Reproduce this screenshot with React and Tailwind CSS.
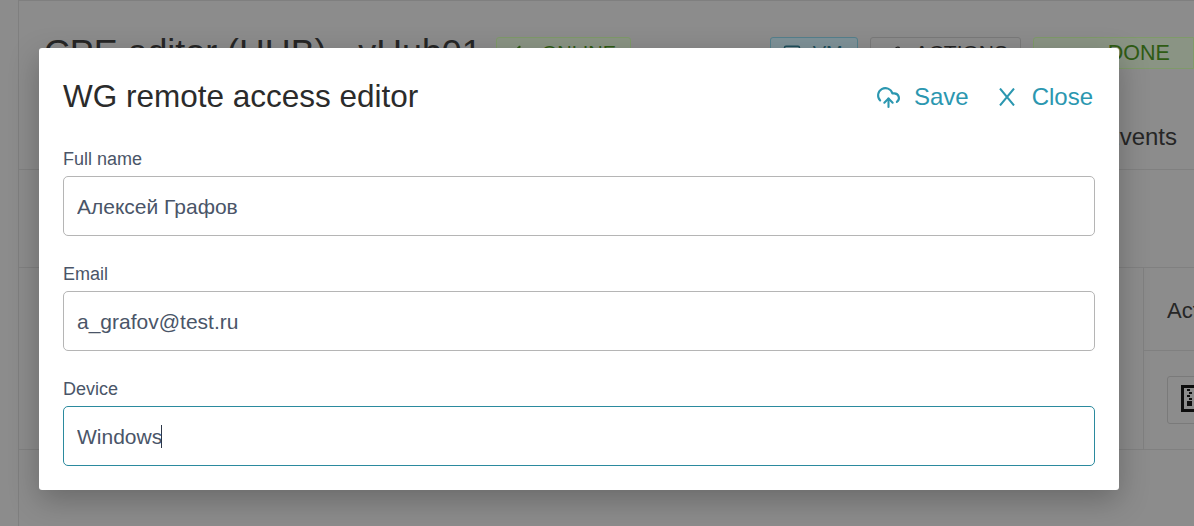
import { useEffect, useRef } from 'react'
import { CloudUpload, Zap, Monitor, Wrench } from 'lucide-react'

function Field({ label, value, focused, className }) {
  const inputRef = useRef(null)

  useEffect(() => {
    if (focused && inputRef.current) {
      const el = inputRef.current
      el.focus()
      el.setSelectionRange(value.length, value.length)
    }
  }, [focused, value])

  return (
    <div className={className}>
      <label className="block text-[18px] leading-[22px] pt-px h-[22px] text-[#4a5568] mb-[7px]">{label}</label>
      <div className="relative">
        <input
          ref={inputRef}
          defaultValue={value}
          className={`block w-full h-[60px] px-[13px] pt-[2px] rounded-[5px] bg-white border text-[21px] text-[#4a5568] outline-none caret-transparent ${
            focused ? 'border-[#2b8a9e]' : 'border-[#b5b5b5]'
          }`}
        />
        {focused && <span className="absolute left-[98px] top-[19px] w-px h-[23px] bg-[#2d3748]" />}
      </div>
    </div>
  )
}

function ZipIcon() {
  return (
    <svg width="26" height="27" viewBox="0 0 26 27" className="block">
      <path d="M1.5 1.5H18L24.5 8V25.5H1.5Z" fill="none" stroke="#0d0d0d" strokeWidth="3" />
      <path d="M6 4h3v2H6zM8 7h3v2H8zM6 10h3v2H6zM8 13h3v2H8zM6 16h5v5H6z" fill="#0d0d0d" />
      <path d="M16 1v8h9" fill="none" stroke="#0d0d0d" strokeWidth="2.5" />
    </svg>
  )
}

function Backdrop() {
  return (
    <div className="h-full ml-[18px] border-l border-t border-[#7f7f7f] bg-[#8c8c8c] text-[#262626]">
      <div className="flex items-center h-[104px] pl-[25px]">
        <h1 className="text-[35.8px] whitespace-nowrap">CPE editor (HUB) - vHub01</h1>
        <span className="ml-[14px] shrink-0 flex items-center h-[32px] w-[135px] pl-[13px] gap-[15px] rounded-[3px] border border-[#7f9a6a] bg-[#8a9484] text-[#2f5b14] text-[20px]">
          <Zap size={17} />
          ONLINE
        </span>
        <span className="ml-[139px] shrink-0 flex items-center h-[32px] w-[88px] pl-[12px] gap-[12px] rounded-[3px] border border-[#55808c] bg-[#7f9298] text-[20px] text-[#1f4f5c]">
          <Monitor size={18} />
          VM
        </span>
        <span className="ml-[12px] shrink-0 flex items-center h-[32px] w-[151px] pl-[17px] gap-[12px] rounded-[3px] border border-[#7a7a7a] text-[21px]">
          <Wrench size={15} />
          ACTIONS
        </span>
        <span className="ml-[12px] flex-1 flex items-center h-[32px] pl-[74px] rounded-l-[3px] border border-[#7f9a6a] bg-[#8a9484] text-[#2f5b14] text-[21.5px]">
          DONE
        </span>
      </div>
      <div className="flex justify-end h-[65px] border-b border-[#808080] pr-[17px] pt-[18px] text-[24px] leading-[28px]">
        Events
      </div>
      <div className="mt-[97px] flex justify-end border-t border-b border-[#808080] overflow-hidden">
        <div className="w-[51px] shrink-0 border-l border-[#808080]">
          <div className="h-[83px] pl-[23px] pt-[30px] text-[22px] leading-[26px] whitespace-nowrap border-b border-[#808080]">Actions</div>
          <div className="h-[98px] pl-[23px] pt-[25px]">
            <div className="w-[48px] h-[48px] pl-[13px] pt-[8px] rounded-[3px] border border-[#7a7a7a]">
              <ZipIcon />
            </div>
          </div>
        </div>
      </div>
    </div>
  )
}

export default function App() {
  return (
    <div className="relative h-[526px] w-[1194px] overflow-hidden bg-[#8c8c8c] font-['Liberation_Sans',sans-serif]">
      <Backdrop />
      <div className="absolute left-[39px] top-[48px] w-[1080px] h-[442px] bg-white rounded-[3px] px-[24px] shadow-[0_10px_30px_rgba(0,0,0,0.25)]">
        <div className="flex items-center justify-between h-[96px] mb-[3px]">
          <h2 className="text-[31.5px] pt-[2px] text-[#2b2b2b]">WG remote access editor</h2>
          <div className="flex items-center pt-[2px] pr-[2px] text-[24px] text-[#2b97b0]">
            <button className="flex items-center gap-[13px]">
              <CloudUpload size={25} strokeWidth={2} />
              Save
            </button>
            <button className="flex items-center gap-[16px] ml-[29px]">
              <svg width="18" height="18" viewBox="0 0 18 18" fill="none" stroke="currentColor" strokeWidth="2">
                <path d="M2 0.5L16 17.5M16 0.5L2 17.5" />
              </svg>
              Close
            </button>
          </div>
        </div>
        <Field label="Full name" value="Алексей Графов" />
        <Field label="Email" value="a_grafov@test.ru" className="mt-[26px]" />
        <Field label="Device" value="Windows" focused className="mt-[26px]" />
      </div>
    </div>
  )
}
